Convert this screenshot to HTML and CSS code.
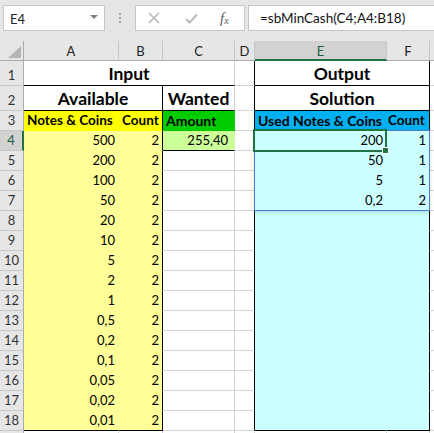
FILE: index.html
```html
<!DOCTYPE html>
<html>
<head>
<meta charset="utf-8">
<link rel="stylesheet" href="styles.css">
</head>
<body>
<div class="app">
  <div class="toolbar">
    <div class="namebox"><span class="nb-text">E4</span><span class="nb-arrow"></span></div>
    <div class="dots"><i></i><i></i><i></i></div>
    <div class="fxbox">
      <svg class="ico" width="12" height="12" viewBox="0 0 12 12"><path d="M1 1 L11 11 M11 1 L1 11" stroke="#b9b9b9" stroke-width="1.6" fill="none"/></svg>
      <svg class="ico" width="13" height="11" viewBox="0 0 13 11"><path d="M1 6 L4.6 9.6 L12 1.5" stroke="#b9b9b9" stroke-width="1.9" fill="none"/></svg>
      <span class="fx">f<sub>x</sub></span>
    </div>
    <div class="formula">=sbMinCash(C4;A4:B18)</div>
  </div>
  <div class="sheet">
    <div class="corner"><span class="tri"></span></div>
    <div class="ch">A</div><div class="ch">B</div><div class="ch">C</div><div class="ch">D</div><div class="ch sel">E</div><div class="ch">F</div><div class="ch last"></div>

    <div class="rh">1</div>
    <div class="c big span3 bb t1">Input</div>
    <div class="c br"></div>
    <div class="c big span2 bb br t1">Output</div>
    <div class="c"></div>

    <div class="rh">2</div>
    <div class="c big span2 bb br t2">Available</div>
    <div class="c big bb t2">Wanted</div>
    <div class="c br"></div>
    <div class="c big span2 bb br t2">Solution</div>
    <div class="c"></div>

    <div class="rh">3</div>
    <div class="c hd Y">Notes &amp; Coins</div>
    <div class="c hd Y br">Count</div>
    <div class="c hd mid g">Amount</div>
    <div class="c br"></div>
    <div class="c hd mid b">Used Notes &amp; Coins</div>
    <div class="c hd b br fc">Count</div>
    <div class="c"></div>

    <div class="rh rsel">4</div>
    <div class="c n y">500</div><div class="c n y br">2</div>
    <div class="c n lg bb amt">255,40</div><div class="c br"></div>
    <div class="c n cy">200</div><div class="c n cy br">1</div><div class="c"></div>

    <div class="rh">5</div>
    <div class="c n y">200</div><div class="c n y br">2</div><div class="c"></div><div class="c br"></div>
    <div class="c n cy">50</div><div class="c n cy br">1</div><div class="c"></div>

    <div class="rh">6</div>
    <div class="c n y">100</div><div class="c n y br">2</div><div class="c"></div><div class="c br"></div>
    <div class="c n cy">5</div><div class="c n cy br">1</div><div class="c"></div>

    <div class="rh">7</div>
    <div class="c n y">50</div><div class="c n y br">2</div><div class="c"></div><div class="c br"></div>
    <div class="c n cy">0,2</div><div class="c n cy br">2</div><div class="c"></div>

    <div class="rh">8</div>
    <div class="c n y">20</div><div class="c n y br">2</div><div class="c"></div><div class="c br"></div>
    <div class="c cy"></div><div class="c cy br"></div><div class="c"></div>

    <div class="rh">9</div>
    <div class="c n y">10</div><div class="c n y br">2</div><div class="c"></div><div class="c br"></div>
    <div class="c cy"></div><div class="c cy br"></div><div class="c"></div>

    <div class="rh">10</div>
    <div class="c n y">5</div><div class="c n y br">2</div><div class="c"></div><div class="c br"></div>
    <div class="c cy"></div><div class="c cy br"></div><div class="c"></div>

    <div class="rh">11</div>
    <div class="c n y">2</div><div class="c n y br">2</div><div class="c"></div><div class="c br"></div>
    <div class="c cy"></div><div class="c cy br"></div><div class="c"></div>

    <div class="rh">12</div>
    <div class="c n y">1</div><div class="c n y br">2</div><div class="c"></div><div class="c br"></div>
    <div class="c cy"></div><div class="c cy br"></div><div class="c"></div>

    <div class="rh">13</div>
    <div class="c n y">0,5</div><div class="c n y br">2</div><div class="c"></div><div class="c br"></div>
    <div class="c cy"></div><div class="c cy br"></div><div class="c"></div>

    <div class="rh">14</div>
    <div class="c n y">0,2</div><div class="c n y br">2</div><div class="c"></div><div class="c br"></div>
    <div class="c cy"></div><div class="c cy br"></div><div class="c"></div>

    <div class="rh">15</div>
    <div class="c n y">0,1</div><div class="c n y br">2</div><div class="c"></div><div class="c br"></div>
    <div class="c cy"></div><div class="c cy br"></div><div class="c"></div>

    <div class="rh">16</div>
    <div class="c n y">0,05</div><div class="c n y br">2</div><div class="c"></div><div class="c br"></div>
    <div class="c cy"></div><div class="c cy br"></div><div class="c"></div>

    <div class="rh">17</div>
    <div class="c n y">0,02</div><div class="c n y br">2</div><div class="c"></div><div class="c br"></div>
    <div class="c cy"></div><div class="c cy br"></div><div class="c"></div>

    <div class="rh">18</div>
    <div class="c n y bb">0,01</div><div class="c n y br bb">2</div><div class="c"></div><div class="c br"></div>
    <div class="c cy bb"></div><div class="c cy br bb"></div><div class="c"></div>

    <div class="rh"></div>
    <div class="c"></div><div class="c"></div><div class="c"></div><div class="c"></div><div class="c"></div><div class="c"></div><div class="c"></div>

    <div class="spill"></div>
    <div class="active"><span class="handle"></span></div>
  </div>
</div>
</body>
</html>
```

FILE: styles.css
```css
html, body {
  margin: 0;
  padding: 0;
  background: #ffffff;
}
body {
  width: 434px;
  height: 433px;
  overflow: hidden;
  font-family: Lato, "Open Sans", sans-serif;
  color: #000;
}
.app {
  width: 434px;
}
.toolbar {
  height: 41px;
  background: #e6e6e6;
  display: flex;
  align-items: flex-start;
  padding-top: 5px;
  box-sizing: border-box;
  position: relative;
}
.namebox {
  margin-left: 3px;
  width: 102px;
  height: 26px;
  box-sizing: border-box;
  background: #fff;
  border: 1px solid #c6c6c6;
  display: flex;
  align-items: center;
  justify-content: space-between;
  padding: 0 6px 0 6px;
  font-size: 13px;
  color: #222;
}
.nb-text {
  padding-top: 1px;
}
.nb-arrow {
  width: 0;
  height: 0;
  border-left: 4px solid transparent;
  border-right: 4px solid transparent;
  border-top: 4px solid #808080;
  margin-top: -2px;
}
.dots {
  width: 30px;
  height: 26px;
  display: flex;
  flex-direction: column;
  align-items: center;
  justify-content: center;
  gap: 2px;
}
.dots i {
  width: 2px;
  height: 2px;
  background: #a9a9a9;
  display: block;
}
.fxbox {
  width: 110px;
  height: 26px;
  box-sizing: border-box;
  background: #fff;
  border: 1px solid #c6c6c6;
  display: flex;
  align-items: center;
  padding-left: 12px;
  gap: 0;
}
.fxbox .ico:first-child {
  margin-right: 25px;
}
.fxbox .ico:nth-child(2) {
  margin-right: 22px;
}
.fx {
  font-family: "Liberation Serif", serif;
  font-style: italic;
  font-size: 15px;
  color: #5a5a5a;
  line-height: 1;
}
.fx sub {
  font-size: 10px;
  vertical-align: -1px;
}
.formula {
  margin-left: 3px;
  flex: 1;
  height: 26px;
  box-sizing: border-box;
  background: #fff;
  border: 1px solid #c6c6c6;
  border-right: none;
  font-size: 13.5px;
  color: #111;
  padding-left: 11px;
  display: flex;
  align-items: center;
  white-space: nowrap;
  overflow: hidden;
}

.sheet {
  display: grid;
  grid-template-columns: 24px 95px 44px 72px 20px 132px 43px 4px;
  grid-template-rows: 20px 25px 25px repeat(16, 20px) 2px;
  position: relative;
  font-size: 13px;
}
.corner {
  background: #e6e6e6;
  border-right: 1px solid #ababab;
  border-bottom: 1px solid #ababab;
  box-sizing: border-box;
  position: relative;
}
.tri {
  position: absolute;
  right: 2px;
  bottom: 2px;
  width: 0;
  height: 0;
  border-left: 13px solid transparent;
  border-bottom: 12px solid #b4b4b4;
}
.ch {
  background: #e6e6e6;
  border-right: 1px solid #c6c6c6;
  border-bottom: 1px solid #ababab;
  box-sizing: border-box;
  display: flex;
  align-items: center;
  justify-content: center;
  color: #222;
  font-size: 13px;
  padding-top: 1px;
}
.ch.last {
  border-right: none;
}
.ch.sel {
  background: #d2d2d2;
  border-bottom: 2px solid #217346;
  color: #1f5d3a;
}
.rh {
  background: #e6e6e6;
  border-right: 1px solid #ababab;
  border-bottom: 1px solid #c6c6c6;
  box-sizing: border-box;
  display: flex;
  align-items: flex-end;
  justify-content: center;
  padding-bottom: 2px;
  color: #333;
  font-size: 13px;
  line-height: 15px;
}
.rh.rsel {
  background: #d2d2d2;
  border-right: 2px solid #217346;
  color: #1f5d3a;
}
.c {
  border-right: 1px solid #d4d4d4;
  border-bottom: 1px solid #d4d4d4;
  box-sizing: border-box;
  display: flex;
  align-items: flex-end;
  padding: 0 3px 2px 3px;
  white-space: nowrap;
  line-height: 15px;
  min-width: 0;
}
.n {
  justify-content: flex-end;
}
.span2 { grid-column: span 2; }
.span3 { grid-column: span 3; }
.big {
  font-weight: 700;
  font-size: 17.5px;
  justify-content: center;
  line-height: 20px;
}
.t1 { padding-bottom: 1px; }
.t2 { padding-bottom: 1px; }
.hd {
  font-weight: 700;
  font-size: 13.5px;
  padding-bottom: 2px;
}
.hd.mid { font-size: 14px; }
.fc { padding-left: 1px; }
.amt { padding-right: 6px; }

.y  { background: #ffff99; border-color: transparent; }
.Y  { background: #ffff00; border-color: transparent; }
.g  { background: #00cc00; border-color: transparent; }
.lg { background: #ccff99; border-color: transparent; }
.b  { background: #00b0f0; border-color: transparent; }
.cy { background: #ccffff; border-color: transparent; }

.br { border-right: 1px solid #000; }
.bb { border-bottom: 1px solid #000; }

.spill {
  position: absolute;
  left: 254px;
  top: 89px;
  width: 176px;
  height: 81px;
  box-sizing: border-box;
  border: 1px solid #4a7bd4;
  box-shadow: 0 2px 4px rgba(0, 0, 0, 0.12);
  pointer-events: none;
}
.active {
  position: absolute;
  left: 253px;
  top: 88px;
  width: 134px;
  height: 23px;
  box-sizing: border-box;
  border: 2px solid #217346;
}
.handle {
  position: absolute;
  right: -4px;
  bottom: -4px;
  width: 5px;
  height: 5px;
  background: #217346;
  border: 1px solid #fff;
}
```
